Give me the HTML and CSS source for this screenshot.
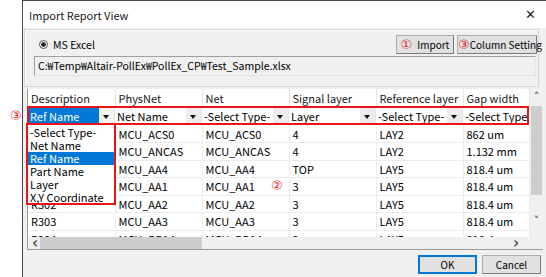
FILE: index.html
```html
<!DOCTYPE html>
<html lang="en">
<head>
  <meta charset="UTF-8" />
  <title>Import Report View</title>
  <link rel="stylesheet" href="styles.css">
</head>
<body>
  <div class="window">
    <div class="titlebar">
      <span class="title">Import Report View</span>
      <span class="close">&#x2715;</span>
    </div>

    <div class="content">
      <div class="group">
        <div class="group-top">
          <label class="radio"><span class="dot"></span>MS Excel</label>
          <div class="group-buttons">
            <button class="btn btn-import"><span class="num">&#x2460;</span>Import</button>
            <button class="btn btn-column"><span class="num">&#x2462;</span>Column Setting</button>
          </div>
        </div>
        <div class="path">C:&#x20A9;Temp&#x20A9;Altair-PollEx&#x20A9;PollEx_CP&#x20A9;Test_Sample.xlsx</div>
      </div>

      <div class="grid-wrap">
        <span class="num num-side">&#x2462;</span>
        <div class="grid">
          <div class="grid-main">
            <table class="sheet">
              <colgroup>
                <col class="c87"><col class="c87"><col class="c87"><col class="c87"><col class="c87"><col class="c66">
              </colgroup>
              <thead>
                <tr class="head">
                  <th>Description</th><th>PhysNet</th><th>Net</th><th>Signal layer</th><th>Reference layer</th><th>Gap width</th>
                </tr>
                <tr class="combos">
                  <td><div class="combo active"><span>Ref Name</span><i class="arrow"></i></div></td>
                  <td><div class="combo"><span>Net Name</span><i class="arrow"></i></div></td>
                  <td><div class="combo"><span>-Select Type-</span><i class="arrow"></i></div></td>
                  <td><div class="combo"><span>Layer</span><i class="arrow"></i></div></td>
                  <td><div class="combo"><span>-Select Type-</span><i class="arrow"></i></div></td>
                  <td><div class="combo"><span>-Select Type-</span></div></td>
                </tr>
              </thead>
              <tbody>
                <!-- description cells under the open list are left blank -->
                <tr><td></td><td>MCU_ACS0</td><td>MCU_ACS0</td><td>4</td><td>LAY2</td><td>862 um</td></tr>
                <tr><td></td><td>MCU_ANCAS</td><td>MCU_ANCAS</td><td>4</td><td>LAY2</td><td>1.132 mm</td></tr>
                <tr><td></td><td>MCU_AA4</td><td>MCU_AA4</td><td>TOP</td><td>LAY5</td><td>818.4 um</td></tr>
                <tr><td></td><td>MCU_AA1</td><td>MCU_AA1</td><td>3</td><td>LAY5</td><td>818.4 um</td></tr>
                <tr><td>R302</td><td>MCU_AA2</td><td>MCU_AA2</td><td>3</td><td>LAY5</td><td>818.4 um</td></tr>
                <tr><td>R303</td><td>MCU_AA3</td><td>MCU_AA3</td><td>3</td><td>LAY5</td><td>818.4 um</td></tr>
                <tr><td>R304</td><td>MCU_BB14</td><td>MCU_BB14</td><td>3</td><td>LAY5</td><td>818.4 um</td></tr>
              </tbody>
            </table>
            <div class="vscroll">
              <span class="sarrow">&#x02C4;</span>
              <div class="vthumb"></div>
              <span class="sarrow down">&#x02C5;</span>
            </div>
          </div>
          <div class="hscroll">
            <span class="sarrow">&lsaquo;</span>
            <div class="hthumb"></div>
            <span class="sarrow right">&rsaquo;</span>
          </div>

          <div class="row-mark"></div>
          <ul class="dropdown">
            <li>-Select Type-</li>
            <li>Net Name</li>
            <li class="selected">Ref Name</li>
            <li>Part Name</li>
            <li>Layer</li>
            <li>X,Y Coordinate</li>
          </ul>
          <span class="num num-mid">&#x2461;</span>
        </div>
      </div>

      <div class="footer">
        <button class="btn btn-ok">OK</button>
        <button class="btn btn-cancel">Cancel</button>
      </div>
    </div>
  </div>
</body>
</html>
```

FILE: styles.css
```css
body {
  margin: 0;
  background: #ffffff;
  font-family: 'Noto Sans CJK KR', 'Liberation Sans', sans-serif;
  font-size: 11px;
  color: #000;
}

.window {
  margin-left: 22px;
  width: 523px;
  height: 276px;
  border: 1px solid #4a4a4a;
  border-right: none;
  background: #f0f0f0;
  display: flex;
  flex-direction: column;
}

.titlebar {
  height: 27px;
  background: #ffffff;
  display: flex;
  align-items: center;
  justify-content: space-between;
  padding: 0 10px 0 6px;
  flex-shrink: 0;
}

.title {
  font-size: 11px;
  line-height: 14px;
  color: #1a1a1a;
}

.close {
  font-family: 'DejaVu Sans', sans-serif;
  font-size: 13px;
  color: #222;
}

.content {
  flex: 1;
  display: flex;
  flex-direction: column;
}

.group {
  box-sizing: border-box;
  margin: 1px 7px 0 1px;
  height: 58px;
  border: 1px solid #d5d5d5;
  box-shadow: inset 1px 1px 0 #fff;
  padding: 5px 1px 0 9px;
}

.group-top {
  display: flex;
  justify-content: space-between;
  align-items: center;
  height: 19px;
}

.radio {
  display: flex;
  align-items: center;
  gap: 5px;
  padding-left: 5px;
  font-size: 10.5px;
  line-height: 13px;
}

.dot {
  width: 7px;
  height: 7px;
  border-radius: 50%;
  border: 1px solid #555;
  background: radial-gradient(circle, #222 0 2px, #fff 2.5px);
}

.group-buttons {
  display: flex;
  gap: 3px;
}

.btn {
  font-family: inherit;
  font-size: 10px;
  line-height: 13px;
  white-space: nowrap;
  height: 19px;
  padding: 0;
  background: #e1e1e1;
  border: 1px solid #adadad;
  border-right-color: #7a7a7a;
  border-bottom-color: #7a7a7a;
  color: #000;
  display: flex;
  align-items: center;
  justify-content: center;
}

.btn-import {
  width: 58px;
}

.btn-column {
  width: 80px;
  justify-content: flex-start;
}

.num {
  color: #e4262c;
  font-family: 'DejaVu Sans', sans-serif;
  font-size: 13px;
  line-height: 1;
}

.btn-import .num {
  margin-right: 5px;
}

.path {
  box-sizing: border-box;
  margin-top: 2px;
  width: 502px;
  height: 20px;
  border: 1px solid #a0a0a0;
  border-right-color: #e3e3e3;
  border-bottom-color: #e3e3e3;
  background: #f0f0f0;
  line-height: 18px;
  padding-left: 3px;
  font-size: 10.5px;
}

.grid-wrap {
  position: relative;
  padding: 2px 0 0 4px;
}

.grid {
  position: relative;
  width: 515px;
  background: #fff;
  border-left: 1px solid #9a9a9a;
  border-bottom: 1px solid #9a9a9a;
}

.grid-main {
  display: flex;
  height: 148px;
  overflow: hidden;
}

.sheet {
  border-collapse: collapse;
  table-layout: fixed;
  width: 501px;
  font-size: 11px;
  line-height: 14px;
}

.c87 { width: 87px; }
.c66 { width: 66px; }

.sheet th,
.sheet td {
  padding: 0 0 0 3px;
  text-align: left;
  white-space: nowrap;
  overflow: hidden;
  font-weight: normal;
}

.head th {
  height: 17px;
  border-right: 1px solid #e5e5e5;
  border-bottom: 1px solid #e5e5e5;
  color: #1a1a1a;
}

.combos td {
  height: 18px;
  padding: 0;
}

.combo {
  display: flex;
  align-items: center;
  justify-content: space-between;
  height: 17px;
  background: #fff;
  border-right: 1px solid #e5e5e5;
}

.combo span {
  padding-left: 2px;
  white-space: nowrap;
}

.combo.active span {
  background: #0078d7;
  color: #fff;
  flex: 1;
  line-height: 17px;
}

.arrow {
  width: 15px;
  height: 17px;
  background: #ececec;
  position: relative;
  flex-shrink: 0;
}

.combo.active .arrow {
  background: #f4f4f4;
}

.arrow::after {
  content: '';
  position: absolute;
  left: 4px;
  top: 7px;
  border-left: 3.5px solid transparent;
  border-right: 3.5px solid transparent;
  border-top: 4px solid #111;
}

.sheet tbody tr {
  height: 17.5px;
}

.sheet tbody td {
  border-right: 1px solid #ececec;
  border-bottom: 1px solid #ececec;
}

.vscroll {
  width: 14px;
  background: #f0f0f0;
  display: flex;
  flex-direction: column;
  align-items: center;
  flex-shrink: 0;
}

.sarrow {
  font-family: 'DejaVu Sans', sans-serif;
  font-size: 11px;
  color: #555;
  height: 16px;
  line-height: 16px;
  font-weight: bold;
}

.vscroll .sarrow {
  height: 17px;
}

.vthumb {
  width: 11px;
  height: 89px;
  background: #cdcdcd;
}

.vscroll .down {
  margin-top: 18px;
}

.hscroll {
  display: flex;
  align-items: center;
  height: 12px;
  background: #f0f0f0;
  padding-left: 4px;
}

.hscroll .sarrow {
  font-size: 15px;
  width: 8px;
  line-height: 12px;
  height: 12px;
}

.hthumb {
  width: 162px;
  height: 12px;
  background: #cdcdcd;
}

.hscroll .right {
  margin-left: auto;
  margin-right: 22px;
}

.row-mark {
  position: absolute;
  left: -1px;
  top: 17px;
  width: 502px;
  height: 19px;
  border: 2px solid #e8141b;
  box-sizing: border-box;
}

.dropdown {
  position: absolute;
  left: -2px;
  top: 34px;
  width: 90px;
  height: 82px;
  margin: 0;
  padding: 1px 0 0;
  list-style: none;
  background: #fff;
  border: 2px solid #e8141b;
  box-sizing: border-box;
  font-size: 11px;
}

.dropdown li {
  height: 13px;
  line-height: 13px;
  padding-left: 2px;
  white-space: nowrap;
}

.dropdown .selected {
  background: #0078d7;
  color: #fff;
}

.num-side {
  position: absolute;
  left: -13px;
  top: 22px;
}

.num-mid {
  position: absolute;
  left: 243px;
  top: 90px;
}

.footer {
  display: flex;
  justify-content: flex-end;
  gap: 5px;
  padding: 5px 5px 0 0;
}

.btn-ok,
.btn-cancel {
  width: 59px;
  height: 19px;
  background: #e1e1e1;
}

.btn-ok {
  border: 1px solid #0078d7;
  box-shadow: inset 0 0 0 1px #0078d7;
}
```
